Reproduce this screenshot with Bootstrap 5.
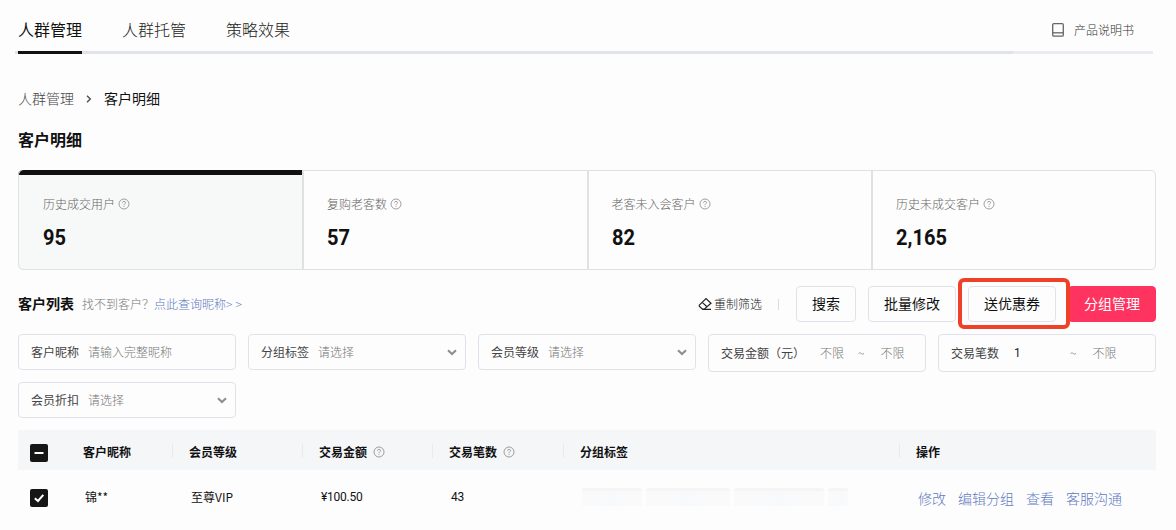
<!DOCTYPE html>
<html lang="zh-CN">
<head>
<meta charset="utf-8">
<meta name="viewport" content="width=device-width, initial-scale=1">
<title>客户明细</title>
<link href="https://cdn.jsdelivr.net/npm/bootstrap@5.3.0/dist/css/bootstrap.min.css" rel="stylesheet">
<style>
body{font-family:"Noto Sans CJK SC",sans-serif;font-size:12px;line-height:20px;color:#111;background:#fdfdfd;height:530px;overflow:hidden}
.page{width:1138px;margin-left:18px}
.fs14{font-size:14px}
.topbar{width:1138px;height:54px;margin-left:-3px;padding-left:3px;background:linear-gradient(90deg,#e0e4e9 998px,#eaeaf0 998px) 0 51px/1138px 3px no-repeat}
.tabs{gap:40px}
.tabs .nav-link{padding:19px 0 0;height:54px;font-size:16px;line-height:21px;color:#222;font-weight:300}
.tabs .nav-link.active{color:#111;font-weight:400;border-bottom:3px solid #111}
.manual{color:#333;margin:8px 19px 0 0;padding-top:12px;font-weight:300}
.crumbs{margin-top:34px}
.crumbs .prev{color:#444;font-weight:300}
h1{font-size:16px;font-weight:600;line-height:24px;margin:19px 0}
.stats{height:100px;border:1px solid #e1e1e1;border-radius:5px}
.stat{padding:23px 0 0 23px;border-left:2px solid #e1e1e1;flex:0 0 284.5px;color:#666;font-weight:300}
.stat:first-child{flex-basis:284px;background:linear-gradient(#111,#111) 0 0/100% 5px no-repeat #f7f9f8;border-left:0;box-shadow:inset 1px 0 #e1e1e1;margin:-1px 0 0 -1px;padding:24px 0 0 25px;border-radius:5px 0 0 5px}
.stat .num{font:700 22.5px/26px Roboto,sans-serif;color:#111;margin-top:10px;transform:scaleX(.89);transform-origin:left}
.help{width:12px;height:12px;margin-left:3px;color:#888}
.tools{height:36px;margin-top:16px}
.bt{height:36px;border:1px solid #e1e1ea;border-radius:4px;padding:0 0 2px;font-size:14px;line-height:32px;width:88px;background:#fdfdfd;color:#111}
.bt.pink{background:#ff335f;border-color:#ff335f;color:#fff}
.ring{position:absolute;left:-10px;top:-8px;width:112px;height:51px;border:4px solid #ee4127;border-radius:6px;z-index:2}
.filters{display:grid;grid-template-columns:repeat(5,218px);gap:12px;margin-top:12px;grid-template-rows:36px 36px}
.fbox{height:36px;border:1px solid #e1e1ea;border-radius:4px;padding:0 8px 0 12px;display:flex;align-items:center;color:#444}
.fbox.tall{height:38px}
.fbox .ph{color:#777;margin-left:9px;font-weight:300}
.trow{display:grid;grid-template-columns:49px 105px 130px 130px 131px 336px 1fr;align-items:center}
.thead-row{height:40px;background:#f5f6f8;margin-top:12px;padding-top:3px;font-weight:600}
.trow>div{padding-left:17px;height:20px;display:flex;align-items:center}
.trow>div:first-child{padding-left:12px}
.trow>div:nth-child(2){padding-left:16px}
.thead-row>div:nth-child(n+3){background:linear-gradient(#e9eaec,#e9eaec) 0 2px/1px 14px no-repeat}
.brow{height:54px}
.brow>div:nth-child(n+3){padding-left:19px}
.brow>div:nth-child(2){padding-left:18px}
.rb{font-family:Roboto,"Noto Sans CJK SC",sans-serif}
.brow .rb{letter-spacing:-.25px}
.cb{width:18px;height:18px;background:#161616;border-radius:2px;flex:none;display:block}
a{color:#5f7ac2;text-decoration:none}
.acts a{font-size:14px;font-weight:300;padding-top:2px}
.hid{height:18px;background:linear-gradient(90deg,#fafafa,#f8f9fb,#fafafa);border-top:3px solid #f5f5f5;border-radius:3px 3px 0 0}
</style>
</head>
<body>
<svg width="0" height="0" class="position-absolute">
<symbol id="q" viewBox="0 0 12 12"><circle cx="6" cy="6" r="5" fill="none" stroke="currentColor" stroke-width=".8"/><path d="M4.4 4.7C4.5 3 7.6 3 7.6 4.7 7.6 5.7 6 5.7 6 7.2M6 8.1V9" fill="none" stroke="currentColor" stroke-width=".8"/></symbol>
<symbol id="dn" viewBox="0 0 10 7"><path d="M1 1.3 5 5 9 1.3" fill="none" stroke="#8e8e8e" stroke-width="2.1"/></symbol>
</svg>
<main class="page">
<header class="topbar d-flex justify-content-between align-items-start">
 <nav class="nav tabs"><a class="nav-link active" href="#">人群管理</a><a class="nav-link" href="#">人群托管</a><a class="nav-link" href="#">策略效果</a></nav>
 <div class="manual d-flex align-items-center"><svg width="12" height="14" viewBox="0 0 12 14" class="me-2" fill="none" stroke="#666" stroke-width="1.3"><rect x=".7" y=".7" width="10.6" height="12.4" rx="1.2"/><path d="M1 9.8H11"/></svg><span style="margin-left:2px">产品说明书</span></div>
</header>
<div class="crumbs fs14 d-flex align-items-center"><span class="prev">人群管理</span><svg width="6" height="8" viewBox="0 0 6 8" style="margin:2px 12px 0"><path d="M1 .8 4.3 4 1 7.2" fill="none" stroke="#555" stroke-width="1.5"/></svg><span>客户明细</span></div>
<h1>客户明细</h1>
<section class="stats d-flex">
 <div class="stat"><div class="d-flex align-items-center">历史成交用户<svg class="help"><use href="#q"/></svg></div><div class="num">95</div></div>
 <div class="stat"><div class="d-flex align-items-center">复购老客数<svg class="help"><use href="#q"/></svg></div><div class="num">57</div></div>
 <div class="stat"><div class="d-flex align-items-center">老客未入会客户<svg class="help"><use href="#q"/></svg></div><div class="num">82</div></div>
 <div class="stat flex-shrink-1"><div class="d-flex align-items-center">历史未成交客户<svg class="help"><use href="#q"/></svg></div><div class="num">2,165</div></div>
</section>
<section class="tools d-flex align-items-center">
 <span class="fs14 fw-bold" style="padding-bottom:2px">客户列表</span><span style="color:#777;margin-left:8px;font-weight:300">找不到客户？</span><a href="#" style="font-weight:300">点此查询昵称<span style="letter-spacing:3px">&gt;&gt;</span></a>
 <div class="ms-auto d-flex align-items-center"><svg width="15" height="14" viewBox="0 0 15 14" fill="none" stroke="#222" stroke-width="1.2"><path d="M1.3 8.2 8 1.5 13 6.2 6.5 12H4.2L1.3 9.2ZM4.3 5.4 9.2 10M4.2 12.4H13"/></svg><span style="color:#222;margin-left:1px;font-weight:300">重制筛选</span><span style="width:1px;height:11px;background:#ddd;margin:0 17px 0 16px"></span></div>
 <div class="d-flex" style="gap:12px"><button class="btn bt" style="width:60px">搜索</button><button class="btn bt">批量修改</button><div class="position-relative"><button class="btn bt">送优惠券</button><span class="ring"></span></div><button class="btn bt pink">分组管理</button></div>
</section>
<section class="filters">
 <div class="fbox">客户昵称<span class="ph">请输入完整昵称</span></div>
 <div class="fbox">分组标签<span class="ph">请选择</span><svg class="ms-auto" width="10" height="7"><use href="#dn"/></svg></div>
 <div class="fbox">会员等级<span class="ph">请选择</span><svg class="ms-auto" width="10" height="7"><use href="#dn"/></svg></div>
 <div class="fbox tall">交易金额（元）<span class="ph" style="margin-left:15px">不限</span><span class="ph" style="margin-left:14px">~</span><span class="ph" style="margin-left:16px">不限</span></div>
 <div class="fbox tall">交易笔数<span class="rb text-dark" style="margin-left:15px;width:41px">1</span><span class="ph" style="margin-left:15px">~</span><span class="ph" style="margin-left:16px">不限</span></div>
 <div class="fbox">会员折扣<span class="ph">请选择</span><svg class="ms-auto" width="10" height="7"><use href="#dn"/></svg></div>
</section>
<section>
 <div class="trow thead-row">
  <div><svg class="cb" style="margin-top:3px" viewBox="0 0 18 18"><path d="M4.5 9H13.5" stroke="#fff" stroke-width="2"/></svg></div><div>客户昵称</div><div>会员等级</div><div>交易金额<svg class="help" style="margin:1px 0 0 6px"><use href="#q"/></svg></div><div>交易笔数<svg class="help" style="margin:1px 0 0 6px"><use href="#q"/></svg></div><div>分组标签</div><div>操作</div>
 </div>
 <div class="trow brow">
  <div><svg class="cb" style="margin-top:2px" viewBox="0 0 18 18"><path d="M4.8 9.2 8 12 13.3 5.8" fill="none" stroke="#fff" stroke-width="2"/></svg></div><div>锦**</div><div>至尊VIP</div><div class="rb">¥100.50</div><div class="rb">43</div><div class="gap-1"><span class="hid" style="width:60px"></span><span class="hid" style="width:84px"></span><span class="hid" style="width:90px"></span><span class="hid" style="width:20px"></span></div><div class="acts" style="gap:12px"><a href="#">修改</a><a href="#">编辑分组</a><a href="#">查看</a><a href="#">客服沟通</a></div>
 </div>
</section>
</main>
<script src="https://cdn.jsdelivr.net/npm/bootstrap@5.3.0/dist/js/bootstrap.bundle.min.js"></script>
</body>
</html>
